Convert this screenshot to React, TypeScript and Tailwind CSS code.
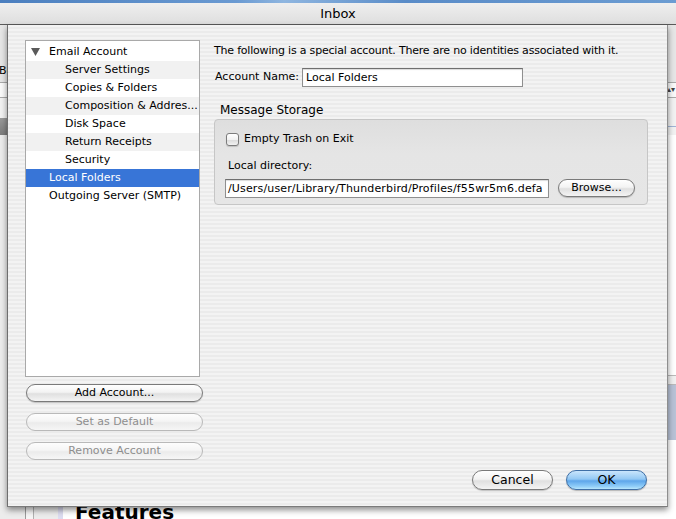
import React from "react";

const treeRows: { label: string; indent: boolean; twisty?: boolean }[] = [
  { label: "Email Account", indent: false, twisty: true },
  { label: "Server Settings", indent: true },
  { label: "Copies & Folders", indent: true },
  { label: "Composition & Addres...", indent: true },
  { label: "Disk Space", indent: true },
  { label: "Return Receipts", indent: true },
  { label: "Security", indent: true },
  { label: "Local Folders", indent: false },
  { label: "Outgoing Server (SMTP)", indent: false },
];

const SELECTED = 7;

function PillButton({
  children,
  disabled,
  className = "",
}: {
  children: React.ReactNode;
  disabled?: boolean;
  className?: string;
}) {
  return (
    <div
      className={
        "flex items-center justify-center rounded-full border " +
        (disabled
          ? "border-[#b9b9b9] text-[#8e8e8e] bg-[linear-gradient(180deg,#fdfdfd_0%,#f5f5f5_45%,#ebebeb_55%,#f6f6f6_100%)] "
          : "border-[#7a7a7a] text-black bg-[linear-gradient(180deg,#ffffff_0%,#f3f3f3_45%,#e0e0e0_55%,#f4f4f4_100%)] shadow-[0_1px_1px_rgba(0,0,0,0.2)] ") +
        className
      }
    >
      {children}
    </div>
  );
}

function Sheet() {
  return (
    <div className="absolute left-[7px] top-[25px] w-[661px] h-[482px] flex flex-col border-l border-r border-b border-l-[#6e6e6e] border-r-[#8e8e8e] border-b-[#7a7a7a] bg-[repeating-linear-gradient(180deg,#f3f3f3_0px,#f3f3f3_2px,#ebebeb_2px,#ebebeb_4px)] shadow-[0_3px_6px_rgba(0,0,0,0.45)]">
      <div className="flex pt-[15px] pl-[17px]">
        {/* account tree and its buttons */}
        <div className="w-[179px] flex flex-col">
          <div className="w-[175px] h-[337px] bg-white border border-[#a9a9a9] pt-[2px]">
            {treeRows.map((r, i) => {
              const sel = i === SELECTED;
              const striped = i === 1 || i === 3 || i === 5;
              return (
                <div
                  key={r.label}
                  className={
                    "h-[18px] flex items-center text-[11px] leading-[18px] whitespace-nowrap " +
                    (sel ? "bg-[#3875d7] text-white " : striped ? "bg-[#f1f1f1] text-black " : "text-black ") +
                    (r.indent ? "pl-[39px]" : "pl-[23px]")
                  }
                >
                  {r.twisty && (
                    <svg width="9" height="8" viewBox="0 0 9 8" className="-ml-[18px] mr-[9px]">
                      <polygon points="0,0 9,0 4.5,8" fill="#5a5a5a" />
                    </svg>
                  )}
                  {r.label}
                </div>
              );
            })}
          </div>
          <div className="flex flex-col gap-[11px] mt-[7px] pl-[1px] text-[11px]">
            <PillButton className="w-[177px] h-[18px]">Add Account...</PillButton>
            <PillButton disabled className="w-[177px] h-[18px]">
              Set as Default
            </PillButton>
            <PillButton disabled className="w-[177px] h-[18px]">
              Remove Account
            </PillButton>
          </div>
        </div>

        {/* account details */}
        <div className="flex flex-col ml-[10px] pt-[4px]">
          <div className="text-[11px] leading-[14px] whitespace-nowrap tracking-[-0.2px]">
            The following is a special account. There are no identities associated with it.
          </div>
          <div className="flex items-center mt-[10px]">
            <span className="w-[88px] pl-[1px] text-[11px] whitespace-nowrap">Account Name:</span>
            <div className="w-[221px] h-[19px] bg-white border border-[#8f8f8f] border-t-[#6f6f6f] shadow-[inset_0_1px_1px_rgba(0,0,0,0.15)] text-[11px] leading-[17px] pl-[3px]">
              Local Folders
            </div>
          </div>
          <div className="mt-[15px] pl-[6px] text-[12px] leading-[16px]">Message Storage</div>
          <div className="mt-[1px] w-[434px] h-[86px] rounded-[4px] border border-[#c6c6c6] bg-[linear-gradient(180deg,#dedede_0%,#e5e5e5_40%,#e6e6e6_100%)] flex flex-col">
            <div className="flex items-center pl-[11px] pt-[11px]">
              <div className="w-[13px] h-[13px] rounded-[3px] border border-[#7c7c7c] bg-[linear-gradient(180deg,#ffffff_0%,#f2f2f2_50%,#dcdcdc_55%,#f2f2f2_100%)] shadow-[0_1px_1px_rgba(0,0,0,0.15)]" />
              <span className="ml-[5px] text-[11px]">Empty Trash on Exit</span>
            </div>
            <div className="pl-[13px] mt-[11px] text-[11px] leading-[14px]">Local directory:</div>
            <div className="flex items-center pl-[10px] mt-[6px]">
              <div className="w-[324px] h-[19px] bg-white border border-[#8f8f8f] border-t-[#6f6f6f] shadow-[inset_0_1px_1px_rgba(0,0,0,0.15)] whitespace-nowrap text-[11px] leading-[17px] pl-[2px] tracking-[0.15px]">
                /Users/user/Library/Thunderbird/Profiles/f55wr5m6.defa
              </div>
              <PillButton className="ml-[9px] w-[77px] h-[18px] text-[11px]">Browse...</PillButton>
            </div>
          </div>
        </div>
      </div>

      <div className="flex-1" />

      <div className="flex justify-end gap-[13px] pr-[20px] pb-[16px] text-[12.5px]">
        <PillButton className="w-[81px] h-[20px]">Cancel</PillButton>
        <div className="w-[81px] h-[20px] flex items-center justify-center rounded-full border border-[#3f6fa6] bg-[linear-gradient(180deg,#c9e5fc_0%,#93c8f4_45%,#5ea6ea_55%,#8fcdf8_85%,#b8e6fd_100%)] shadow-[0_1px_1px_rgba(0,0,0,0.25)] text-black">
          OK
        </div>
      </div>
    </div>
  );
}

export default function App() {
  return (
    <div className="relative w-[676px] h-[519px] overflow-hidden bg-[#e8e8e8] font-['DejaVu_Sans',sans-serif] text-black">
      {/* window title bar */}
      <div className="h-[25px] flex flex-col">
        <div className="h-[3px] bg-[linear-gradient(90deg,#4b7fbf_0%,#6a9ad2_35%,#8fb6e0_42%,#5a8cc8_60%,#6b9cd2_100%)]" />
        <div className="flex-1 flex items-center justify-center pt-[1px] bg-[linear-gradient(180deg,#efefef_0%,#dedede_100%)] border-b border-[#5a5a5a] text-[13px]">
          Inbox
        </div>
      </div>

      {/* main window behind the sheet */}
      <div className="h-[494px] flex flex-col">
        <div className="h-[57px] bg-[#e6e6e6] flex items-end pb-[5px]">
          <span className="-ml-[1px] text-[11px] leading-[12px]">Book</span>
        </div>
        <div className="h-[1px] bg-[#a9a9a9]" />
        <div className="h-[14px] bg-[#fafafa] flex justify-end items-center pr-[1px] text-[8px] text-[#444]">
          ▴▾
        </div>
        <div className="h-[1px] bg-[#a9a9a9]" />
        <div className="h-[20px] bg-[#f2f2f2]" />
        <div className="h-[17px] flex">
          <div className="w-[60px] bg-[linear-gradient(180deg,#9a9a9a,#7c7c7c)]" />
          <div className="flex-1 bg-[#f2f2f2] flex flex-col justify-center">
            <div className="h-[1px] bg-[#9fb4d6]" />
          </div>
        </div>
        <div className="flex-1 flex">
          <div className="w-[58px] bg-[#ececec] flex">
            <div className="w-[25px]" />
            <div className="w-[1px] bg-[#9a9a9a]" />
            <div className="w-[7px] bg-[#f5f5f5]" />
            <div className="w-[1px] bg-[#b0b0b0]" />
          </div>
          <div className="w-[5px] bg-[#dcdcf0]" />
          <div className="flex-1 flex flex-col bg-white">
            <div className="h-[240px] bg-white" />
            <div className="h-[1px] bg-[#b9b9b9]" />
            <div className="h-[8px] bg-[#f0f0f0]" />
            <div className="h-[1px] bg-[#b9b9b9]" />
            <div className="h-[55px] bg-[#b7c2d6]" />
            <div className="flex-1 flex flex-col justify-end pl-[12px]">
              <span className="text-[20px] font-bold leading-[20px] -mb-[3px]">Features</span>
            </div>
          </div>
        </div>
      </div>

      <Sheet />
    </div>
  );
}
